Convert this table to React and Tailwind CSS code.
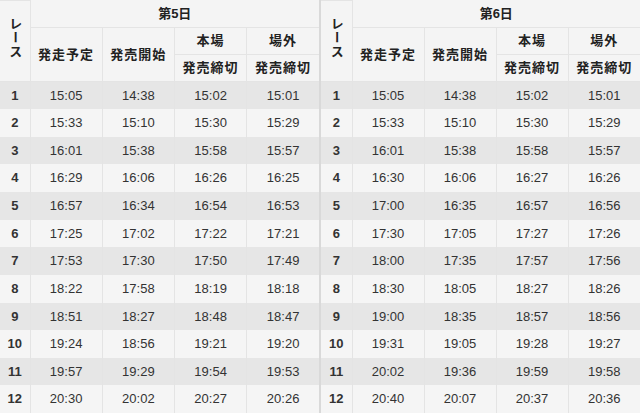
import React from "react";

const day5 = [
  ["15:05", "14:38", "15:02", "15:01"],
  ["15:33", "15:10", "15:30", "15:29"],
  ["16:01", "15:38", "15:58", "15:57"],
  ["16:29", "16:06", "16:26", "16:25"],
  ["16:57", "16:34", "16:54", "16:53"],
  ["17:25", "17:02", "17:22", "17:21"],
  ["17:53", "17:30", "17:50", "17:49"],
  ["18:22", "17:58", "18:19", "18:18"],
  ["18:51", "18:27", "18:48", "18:47"],
  ["19:24", "18:56", "19:21", "19:20"],
  ["19:57", "19:29", "19:54", "19:53"],
  ["20:30", "20:02", "20:27", "20:26"],
];

const day6 = [
  ["15:05", "14:38", "15:02", "15:01"],
  ["15:33", "15:10", "15:30", "15:29"],
  ["16:01", "15:38", "15:58", "15:57"],
  ["16:30", "16:06", "16:27", "16:26"],
  ["17:00", "16:35", "16:57", "16:56"],
  ["17:30", "17:05", "17:27", "17:26"],
  ["18:00", "17:35", "17:57", "17:56"],
  ["18:30", "18:05", "18:27", "18:26"],
  ["19:00", "18:35", "18:57", "18:56"],
  ["19:31", "19:05", "19:28", "19:27"],
  ["20:02", "19:36", "19:59", "19:58"],
  ["20:40", "20:07", "20:37", "20:36"],
];

const th = "border border-[#e4e4e4] font-bold text-[13px] text-[#222] p-0 text-center";
const td = "border-x border-[#e4e4e4] text-[13px] text-[#333] p-0 text-center";

const DayTable = ({ title, rows, raceW }) => (
  <table className="table-fixed border-collapse w-[319px]">
    <colgroup>
      <col style={{ width: raceW }} />
      <col />
      <col />
      <col />
      <col />
    </colgroup>
    <thead>
      <tr className="h-[27px]">
        <th rowSpan={3} className={`${th} border-l-0`}>
          <span className="inline-block [writing-mode:vertical-rl] leading-[15px] tracking-[1px]">レース</span>
        </th>
        <th colSpan={4} className={`${th} border-t-0 border-r-0`}>{title}</th>
      </tr>
      <tr className="h-[27px]">
        <th rowSpan={2} className={`${th} tracking-[1px]`}>発走予定</th>
        <th rowSpan={2} className={`${th} tracking-[1px]`}>発売開始</th>
        <th className={`${th} tracking-[1px]`}>本場</th>
        <th className={`${th} border-r-0 tracking-[1px]`}>場外</th>
      </tr>
      <tr className="h-[27px]">
        <th className={`${th} tracking-[1px]`}>発売締切</th>
        <th className={`${th} border-r-0 tracking-[1px]`}>発売締切</th>
      </tr>
    </thead>
    <tbody>
      {rows.map((r, i) => (
        <tr key={i} className={`h-[27.5px] ${i % 2 === 0 ? "bg-[#e6e6e6]" : "bg-[#f5f5f5]"}`}>
          <td className={`${td} border-l-0 font-bold text-[#222]`}>{i + 1}</td>
          {r.map((t, j) => (
            <td key={j} className={`${td} ${j === 3 ? "border-r-0" : ""}`}>{t}</td>
          ))}
        </tr>
      ))}
    </tbody>
  </table>
);

export default function App() {
  return (
    <div
      className="flex w-[640px] h-[413px] overflow-hidden bg-[#f4f4f4]"
      style={{ fontFamily: '"Liberation Sans", "Noto Sans CJK JP", sans-serif' }}
    >
      <DayTable title="第5日" rows={day5} raceW="30px" />
      <div className="w-[2px] shrink-0 bg-[#d9d9d9]" />
      <DayTable title="第6日" rows={day6} raceW="31px" />
    </div>
  );
}
